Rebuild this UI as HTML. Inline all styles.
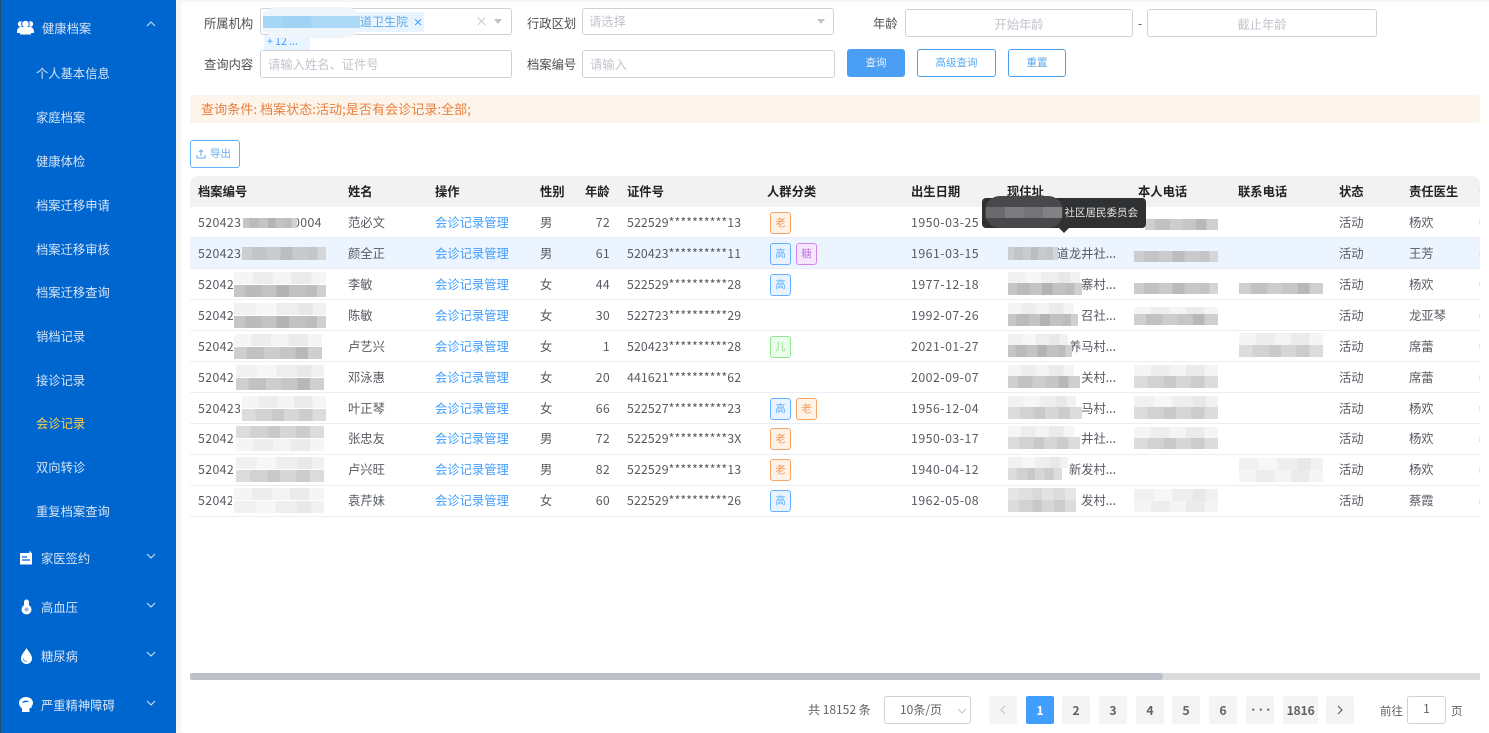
<!DOCTYPE html>
<html lang="zh">
<head>
<meta charset="utf-8">
<title>会诊记录</title>
<style>
html,body{margin:0;padding:0;width:1489px;height:733px;overflow:hidden;background:#f5f5f5}
body{position:relative;font-family:"Liberation Sans","Noto Sans CJK SC",sans-serif;font-size:12.3px;color:#606266}
body,.c,.s,.l,.ph,.b,.pg{font-family:"Noto Sans CJK SC","Liberation Sans",sans-serif}
div,span{box-sizing:border-box}
.a{position:absolute}
#side{position:absolute;left:0;top:0;width:176px;height:733px;background:#0066cf;border-left:1px solid #26486e}
#main{position:absolute;left:181px;top:2px;width:1308px;height:731px;background:#fff;border-radius:4px 0 0 4px}
.s{position:absolute;left:35px;color:#d6e4f5;font-size:12.3px;line-height:20px;white-space:nowrap}
.g{left:41px}
.ch{position:absolute;left:145px;width:10px;height:6px}
.ic{position:absolute}
.l{position:absolute;color:#505050;font-size:12.3px;line-height:20px;white-space:nowrap}
.box{position:absolute;background:#fff;border:1px solid #cfd1d6;border-radius:3px}
.ph{position:absolute;color:#c0c4cc;font-size:12.3px;line-height:20px;white-space:nowrap}
.b{position:absolute;top:49px;height:28px;border:1px solid #4a9ff5;border-radius:3px;color:#5aa9f2;background:#fff;font-size:10.5px;line-height:26px;text-align:center}
.r{position:absolute;left:190px;width:1290px;height:31px;border-bottom:1px solid #ebeef5;background:#fff}
.r::after{content:"";position:absolute;left:1289px;top:13px;width:1px;height:5px;background:#e6e6e6}
.c{position:absolute;top:0;line-height:30px;white-space:nowrap;color:#565a60;font-size:12.3px}
.h{position:absolute;top:0;line-height:31px;white-space:nowrap;color:#222;font-weight:700;font-size:12.3px}
.k1{left:8px;letter-spacing:.4px}.k2{left:158px}.k3{left:245px;color:#409eff}.k4{left:350px}.k5{left:385px;width:35px;text-align:right;letter-spacing:.3px}.k6{left:437px;letter-spacing:.12px}.k8{left:721px;letter-spacing:.5px}.k9{right:364px}.k12{left:1149px}.k13{left:1219px}
.t{position:absolute;top:5px;width:21px;height:22px;border:1px solid;border-radius:3px;font-size:10.5px;line-height:20px;text-align:center}
.t1{left:580px}.t2{left:606px}
.up .c,.up .t{margin-top:-1px}
.o{background:#fff3e8;border-color:#f7a469;color:#f49a58}
.u{background:#e8f3ff;border-color:#66b1ff;color:#66aef5}
.p{background:#f5e6fb;border-color:#cf87ea;color:#c278e0}
.n{background:#edfdec;border-color:#8de88f;color:#8ddf8f}
.halo{position:absolute;background:#fff;border-radius:12px}
.m{position:absolute}
.d1{background:linear-gradient(90deg,#c6c6c6 0 12%,#bbb 12% 30%,#c4c4c4 30% 46%,#b3b3b3 46% 60%,#c2c2c2 60% 78%,#bdbdbd 78% 90%,#d0d0d0 90%)}
.d2{background:linear-gradient(90deg,#cfcfcf 0 14%,#c2c2c2 14% 34%,#cdcdcd 34% 52%,#c6c6c6 52% 70%,#b8b8b8 70% 84%,#cfcfcf 84%)}
.d3{background:linear-gradient(90deg,#dcdcdc 0 16%,#d2d2d2 16% 36%,#c9c9c9 36% 50%,#d6d6d6 50% 68%,#cccccc 68% 84%,#dcdcdc 84%)}
.w1{background:linear-gradient(90deg,#f5f5f5 0 20%,#ededed 20% 42%,#f4f4f4 42% 62%,#ebebeb 62% 84%,#f5f5f5 84%)}
.w2{background:linear-gradient(90deg,#f1f1f1 0 24%,#f7f7f7 24% 46%,#eeeeee 46% 70%,#e8e8e8 70% 86%,#f1f1f1 86%)}
.pg{position:absolute;top:696px;width:28px;height:28px;background:#f4f4f5;border-radius:2px;color:#606266;font-weight:700;font-size:12.3px;line-height:28px;text-align:center}
.pg svg{position:absolute;left:10px;top:9px}
</style>
</head>
<body>
<div id="main"></div>

<div id="side">
  <svg class="ic" style="left:16px;top:20px" width="17" height="15" viewBox="0 0 17 15"><circle cx="3.600" cy="4" r="2.800" fill="#fff"/><circle cx="13.400" cy="4" r="2.800" fill="#fff"/><circle cx="8.500" cy="4" r="3.800" fill="#fff" stroke="#0066cf"/><path d="M0 12c0-3 1.500-5 4-5h9c2.500 0 4 2 4 5v1h-3v1.500H3V13H0z" fill="#fff"/></svg>
  <div class="s g" style="top:18px">健康档案</div>
  <svg class="ch" style="top:21px" viewBox="0 0 10 6"><path d="M1 5l4-4 4 4" fill="none" stroke="#d6e4f5" stroke-width="1"/></svg>
  <div class="s" style="top:63px">个人基本信息</div>
  <div class="s" style="top:107px">家庭档案</div>
  <div class="s" style="top:151px">健康体检</div>
  <div class="s" style="top:195px">档案迁移申请</div>
  <div class="s" style="top:239px">档案迁移审核</div>
  <div class="s" style="top:282px">档案迁移查询</div>
  <div class="s" style="top:326px">销档记录</div>
  <div class="s" style="top:370px">接诊记录</div>
  <div class="s" style="top:413px;color:#ffd04b">会诊记录</div>
  <div class="s" style="top:457px">双向转诊</div>
  <div class="s" style="top:501px">重复档案查询</div>

  <svg class="ic" style="left:18px;top:550px" width="14" height="15" viewBox="0 0 14 15"><path d="M1 3h9.500V1.500h1.500V3h1v11.500H1z" fill="#fff"/><path d="M3 7h5M3 10h8" stroke="#0066cf" stroke-width="1.200"/></svg>
  <div class="s g" style="left:40px;top:548px">家医签约</div>
  <svg class="ch" style="top:553px" viewBox="0 0 10 6"><path d="M1 1l4 4 4-4" fill="none" stroke="#d6e4f5" stroke-width="1"/></svg>

  <svg class="ic" style="left:20px;top:599px" width="11" height="16" viewBox="0 0 11 16"><rect x="3" y="0.500" width="5" height="7" rx="2.500" fill="#fff"/><circle cx="5.500" cy="10.500" r="5" fill="#fff"/><circle cx="5.500" cy="10.500" r="2" fill="#0066cf" opacity=".45"/></svg>
  <div class="s g" style="left:40px;top:597px">高血压</div>
  <svg class="ch" style="top:602px" viewBox="0 0 10 6"><path d="M1 1l4 4 4-4" fill="none" stroke="#d6e4f5" stroke-width="1"/></svg>

  <svg class="ic" style="left:20px;top:648px" width="11" height="16" viewBox="0 0 11 16"><path d="M5.500 0C7 3 11 6.500 11 10.500a5.500 5.500 0 0 1-11 0C0 6.500 4 3 5.500 0z" fill="#fff"/><path d="M2.500 10.500c0 2 1.500 3 3.500 3" fill="none" stroke="#0066cf" stroke-width="1" opacity=".6"/></svg>
  <div class="s g" style="left:40px;top:646px">糖尿病</div>
  <svg class="ch" style="top:651px" viewBox="0 0 10 6"><path d="M1 1l4 4 4-4" fill="none" stroke="#d6e4f5" stroke-width="1"/></svg>

  <svg class="ic" style="left:18px;top:697px" width="14" height="15" viewBox="0 0 14 15"><path d="M7 0c4 0 7 2.500 7 6 0 1.500-.8 2.500-1.500 3.500V11h-2v4H3v-3.500C1 10 0 8 0 6c0-3.500 3-6 7-6z" fill="#fff"/><path d="M3 5.500C4 3.500 8 3 10.500 4.500 8 4.500 6 6 3 5.500z" fill="#0066cf"/></svg>
  <div class="s g" style="left:40px;top:695px">严重精神障碍</div>
  <svg class="ch" style="top:700px" viewBox="0 0 10 6"><path d="M1 1l4 4 4-4" fill="none" stroke="#d6e4f5" stroke-width="1"/></svg>
</div>

<!-- filters -->
<div class="l" style="left:204px;top:13px">所属机构</div>
<div class="box" style="left:260px;top:8px;width:252px;height:27px"></div>
<div class="a" style="left:263px;top:12px;width:161px;height:20px;background:#e8f4ff"></div>
<div class="a" style="left:264px;top:35px;width:46px;height:15px;background:#e8f4ff;font-size:10.500px;line-height:14px;color:#409eff;padding-left:3px;overflow:hidden;white-space:nowrap">+ 12 ...</div>
<div class="a" style="left:263px;top:7px;width:97px;height:31px;background:#eef6fc;border-radius:14px"></div>
<div class="a" style="left:263px;top:16px;width:97px;height:12px;background:linear-gradient(90deg,#a6d6f5 0 20%,#9fd2f3 20% 50%,#acd9f6 50%)"></div>
<div class="a" style="left:360px;top:12px;font-size:12px;line-height:20px;color:#5aa9e6;white-space:nowrap">道卫生院</div>
<div class="a" style="left:413px;top:12px;font-size:10px;line-height:20px;color:#409eff;font-weight:700">×</div>
<div class="a" style="left:475px;top:11px;font-size:13px;line-height:20px;color:#c0c4cc">×</div>
<div class="a" style="left:494px;top:19px;width:0;height:0;border:4px solid transparent;border-top:5px solid #c0c4cc"></div>

<div class="l" style="left:204px;top:54px">查询内容</div>
<div class="box" style="left:260px;top:50px;width:252px;height:28px"></div>
<div class="ph" style="left:268px;top:54px">请输入姓名、证件号</div>

<div class="l" style="left:527px;top:13px">行政区划</div>
<div class="box" style="left:582px;top:8px;width:252px;height:27px"></div>
<div class="ph" style="left:589px;top:11px">请选择</div>
<div class="a" style="left:817px;top:19px;width:0;height:0;border:4px solid transparent;border-top:5px solid #c0c4cc"></div>

<div class="l" style="left:873px;top:13px">年龄</div>
<div class="box" style="left:905px;top:9px;width:228px;height:28px"></div>
<div class="ph" style="left:905px;top:14px;width:228px;text-align:center">开始年龄</div>
<div class="l" style="left:1138px;top:13px">-</div>
<div class="box" style="left:1147px;top:9px;width:230px;height:28px"></div>
<div class="ph" style="left:1147px;top:14px;width:230px;text-align:center">截止年龄</div>

<div class="l" style="left:527px;top:54px">档案编号</div>
<div class="box" style="left:582px;top:50px;width:253px;height:28px"></div>
<div class="ph" style="left:590px;top:54px">请输入</div>

<div class="b" style="left:847px;width:58px;background:#4a9ff5;color:#e8f3ff">查询</div>
<div class="b" style="left:917px;width:79px">高级查询</div>
<div class="b" style="left:1008px;width:58px">重置</div>

<div class="a" style="left:190px;top:95px;width:1290px;height:28px;background:#fdf5ec;border-radius:2px;color:#e6813e;font-size:13.100px;line-height:28px;padding-left:11px;white-space:nowrap;font-family:'Noto Sans CJK SC',sans-serif">查询条件: 档案状态:活动;是否有会诊记录:全部;</div>

<div class="a" style="left:190px;top:140px;width:50px;height:28px;border:1px solid #66b1ff;border-radius:3px;background:#fff;color:#66aef5;font-size:10.500px;line-height:26px;padding-left:19px;font-family:'Noto Sans CJK SC',sans-serif">导出</div>
<svg class="ic" style="left:196px;top:149px" width="10" height="10" viewBox="0 0 10 10"><path d="M5 7V1M3 3l2-2 2 2M1 6v3h8V6" fill="none" stroke="#66aef5" stroke-width="1"/></svg>

<!-- table head -->
<div class="r" style="top:176px;background:#f2f2f2;border-radius:8px 8px 0 0;border:0">
  <span class="h" style="left:8px">档案编号</span><span class="h" style="left:158px">姓名</span><span class="h" style="left:245px">操作</span><span class="h" style="left:350px">性别</span><span class="h" style="left:395px">年龄</span><span class="h" style="left:437px">证件号</span><span class="h" style="left:577px">人群分类</span><span class="h" style="left:721px">出生日期</span><span class="h" style="left:817px">现住址</span><span class="h" style="left:948px">本人电话</span><span class="h" style="left:1048px">联系电话</span><span class="h" style="left:1149px">状态</span><span class="h" style="left:1219px">责任医生</span>
</div>

<div class="r" style="top:207px"><span class="c k1">520423</span><span class="c" style="left:103px;letter-spacing:.4px">0004</span><span class="c k2">范必文</span><span class="c k3">会诊记录管理</span><span class="c k4">男</span><span class="c k5">72</span><span class="c k6">522529**********13</span><span class="t t1 o">老</span><span class="c k8">1950-03-25</span><span class="c k12">活动</span><span class="c k13">杨欢</span></div>
<div class="r" style="top:238px;background:#ecf5ff"><span class="c k1">520423</span><span class="c k2">颜全正</span><span class="c k3">会诊记录管理</span><span class="c k4">男</span><span class="c k5">61</span><span class="c k6">520423**********11</span><span class="t t1 u">高</span><span class="t t2 p">糖</span><span class="c k8">1961-03-15</span><span class="c k9">道龙井社...</span><span class="c k12">活动</span><span class="c k13">王芳</span></div>
<div class="r" style="top:269px"><span class="c k1">52042</span><span class="c k2">李敏</span><span class="c k3">会诊记录管理</span><span class="c k4">女</span><span class="c k5">44</span><span class="c k6">522529**********28</span><span class="t t1 u">高</span><span class="c k8">1977-12-18</span><span class="c k9">寨村...</span><span class="c k12">活动</span><span class="c k13">杨欢</span></div>
<div class="r" style="top:300px"><span class="c k1">52042</span><span class="c k2">陈敏</span><span class="c k3">会诊记录管理</span><span class="c k4">女</span><span class="c k5">30</span><span class="c k6">522723**********29</span><span class="c k8">1992-07-26</span><span class="c k9">召社...</span><span class="c k12">活动</span><span class="c k13">龙亚琴</span></div>
<div class="r" style="top:331px"><span class="c k1">52042</span><span class="c k2">卢艺兴</span><span class="c k3">会诊记录管理</span><span class="c k4">女</span><span class="c k5">1</span><span class="c k6">520423**********28</span><span class="t t1 n">儿</span><span class="c k8">2021-01-27</span><span class="c k9">养马村...</span><span class="c k12">活动</span><span class="c k13">席蕾</span></div>
<div class="r" style="top:362px"><span class="c k1">52042</span><span class="c k2">邓泳惠</span><span class="c k3">会诊记录管理</span><span class="c k4">女</span><span class="c k5">20</span><span class="c k6">441621**********62</span><span class="c k8">2002-09-07</span><span class="c k9">关村...</span><span class="c k12">活动</span><span class="c k13">席蕾</span></div>
<div class="r" style="top:393px"><span class="c k1">520423</span><span class="c k2">叶正琴</span><span class="c k3">会诊记录管理</span><span class="c k4">女</span><span class="c k5">66</span><span class="c k6">522527**********23</span><span class="t t1 u">高</span><span class="t t2 o">老</span><span class="c k8">1956-12-04</span><span class="c k9">马村...</span><span class="c k12">活动</span><span class="c k13">杨欢</span></div>
<div class="r up" style="top:424px"><span class="c k1">52042</span><span class="c k2">张忠友</span><span class="c k3">会诊记录管理</span><span class="c k4">男</span><span class="c k5">72</span><span class="c k6">522529**********3X</span><span class="t t1 o">老</span><span class="c k8">1950-03-17</span><span class="c k9">井社...</span><span class="c k12">活动</span><span class="c k13">杨欢</span></div>
<div class="r up" style="top:455px"><span class="c k1">52042</span><span class="c k2">卢兴旺</span><span class="c k3">会诊记录管理</span><span class="c k4">男</span><span class="c k5">82</span><span class="c k6">522529**********13</span><span class="t t1 o">老</span><span class="c k8">1940-04-12</span><span class="c k9">新发村...</span><span class="c k12">活动</span><span class="c k13">杨欢</span></div>
<div class="r up" style="top:486px"><span class="c k1">52042</span><span class="c k2">袁芹妹</span><span class="c k3">会诊记录管理</span><span class="c k4">女</span><span class="c k5">60</span><span class="c k6">522529**********26</span><span class="t t1 u">高</span><span class="c k8">1962-05-08</span><span class="c k9">发村...</span><span class="c k12">活动</span><span class="c k13">蔡霞</span></div>

<!-- mosaics: id col -->
<div class="m d1" style="left:243px;top:218px;width:54px;height:10px"></div>
<div class="m d1" style="left:242px;top:247px;width:84px;height:13px;opacity:.85"></div>
<div class="halo" style="left:233px;top:271px;width:94px;height:28px"></div><div class="m w1" style="left:234px;top:272px;width:92px;height:12px"></div><div class="m d1" style="left:234px;top:285px;width:92px;height:12px"></div>
<div class="halo" style="left:233px;top:302px;width:94px;height:28px"></div><div class="m w2" style="left:234px;top:303px;width:92px;height:12px"></div><div class="m d1" style="left:234px;top:316px;width:92px;height:12px"></div>
<div class="halo" style="left:233px;top:333px;width:90px;height:28px"></div><div class="m w1" style="left:234px;top:334px;width:88px;height:12px"></div><div class="m d2" style="left:234px;top:347px;width:88px;height:12px"></div>
<div class="halo" style="left:233px;top:364px;width:92px;height:28px"></div><div class="m w2" style="left:236px;top:365px;width:88px;height:12px"></div><div class="m d2" style="left:236px;top:378px;width:88px;height:12px"></div>
<div class="halo" style="left:240px;top:395px;width:88px;height:28px"></div><div class="m w1" style="left:242px;top:396px;width:84px;height:12px"></div><div class="m d3" style="left:242px;top:409px;width:84px;height:12px"></div>
<div class="halo" style="left:234px;top:425px;width:92px;height:28px"></div><div class="m d3" style="left:236px;top:426px;width:88px;height:12px"></div><div class="m w1" style="left:236px;top:439px;width:88px;height:12px"></div>
<div class="halo" style="left:234px;top:456px;width:92px;height:28px"></div><div class="m w2" style="left:236px;top:457px;width:88px;height:12px"></div><div class="m d3" style="left:236px;top:470px;width:88px;height:12px"></div>
<div class="halo" style="left:232px;top:487px;width:94px;height:28px"></div><div class="m w1" style="left:234px;top:488px;width:90px;height:12px"></div><div class="m w2" style="left:234px;top:501px;width:90px;height:12px"></div>

<!-- mosaics: address -->
<div class="m d1" style="left:1008px;top:247px;width:50px;height:13px;opacity:.85"></div>
<div class="m w2" style="left:1008px;top:272px;width:72px;height:11px"></div><div class="m d1" style="left:1008px;top:283px;width:74px;height:12px"></div>
<div class="m w1" style="left:1008px;top:303px;width:66px;height:11px"></div><div class="m d1" style="left:1008px;top:314px;width:70px;height:12px"></div>
<div class="m w2" style="left:1008px;top:334px;width:60px;height:11px"></div><div class="m d1" style="left:1008px;top:345px;width:64px;height:12px"></div>
<div class="m w1" style="left:1008px;top:365px;width:66px;height:11px"></div><div class="m d2" style="left:1008px;top:376px;width:72px;height:12px"></div>
<div class="m w2" style="left:1008px;top:396px;width:68px;height:11px"></div><div class="m d3" style="left:1008px;top:407px;width:74px;height:12px"></div>
<div class="m w1" style="left:1008px;top:426px;width:66px;height:11px"></div><div class="m d3" style="left:1008px;top:437px;width:72px;height:12px"></div>
<div class="m w2" style="left:1008px;top:457px;width:60px;height:11px"></div><div class="m d3" style="left:1008px;top:468px;width:54px;height:12px"></div>
<div class="m d3" style="left:1008px;top:488px;width:68px;height:12px;opacity:.7"></div><div class="m d3" style="left:1008px;top:500px;width:68px;height:12px"></div>

<!-- mosaics: phone -->
<div class="m d2" style="left:1145px;top:219px;width:73px;height:11px"></div>
<div class="m d1" style="left:1134px;top:251px;width:84px;height:11px;opacity:.85"></div>
<div class="m d1" style="left:1134px;top:283px;width:84px;height:11px;opacity:.9"></div>
<div class="m w1" style="left:1134px;top:307px;width:84px;height:7px"></div><div class="m d2" style="left:1134px;top:314px;width:84px;height:11px"></div>
<div class="m w1" style="left:1134px;top:365px;width:84px;height:11px"></div><div class="m d3" style="left:1134px;top:376px;width:84px;height:12px"></div>
<div class="m w2" style="left:1134px;top:396px;width:84px;height:11px"></div><div class="m d3" style="left:1134px;top:407px;width:84px;height:12px"></div>
<div class="m w1" style="left:1134px;top:427px;width:84px;height:11px"></div><div class="m d3" style="left:1134px;top:438px;width:84px;height:11px"></div>
<div class="m w2" style="left:1134px;top:489px;width:84px;height:12px"></div><div class="m w1" style="left:1134px;top:501px;width:84px;height:11px"></div>

<!-- mosaics: contact -->
<div class="m d2" style="left:1239px;top:283px;width:84px;height:11px"></div>
<div class="m w1" style="left:1239px;top:333px;width:84px;height:12px"></div><div class="m d3" style="left:1239px;top:345px;width:84px;height:12px"></div>
<div class="m w2" style="left:1239px;top:458px;width:84px;height:12px"></div><div class="m w1" style="left:1239px;top:470px;width:84px;height:12px"></div>

<!-- tooltip -->
<div class="a" style="left:982px;top:198px;width:164px;height:30px;background:#303133;border-radius:4px;color:#e6e6e6;font-size:10.500px;line-height:30px;text-align:right;padding-right:8px;font-family:'Noto Sans CJK SC',sans-serif">社区居民委员会</div>
<div class="a" style="left:1059px;top:228px;width:0;height:0;border:5px solid transparent;border-top:5px solid #303133"></div>
<div class="a" style="left:985px;top:196px;width:78px;height:32px;background:#48494b;border-radius:15px"></div>
<div class="a" style="left:986px;top:207px;width:76px;height:11px;background:linear-gradient(90deg,#6a6a6c 0 25%,#7c7c7e 25% 50%,#747476 50% 75%,#828284 75%)"></div>

<!-- scrollbar -->
<div class="a" style="left:190px;top:673px;width:1290px;height:7px;background:#dcdcdc"></div>
<div class="a" style="left:190px;top:673px;width:973px;height:7px;background:#bcc0c8;border-radius:3px"></div>

<!-- pagination -->
<div class="l" style="left:808px;top:700px;font-size:12px;color:#606266">共 18152 条</div>
<div class="box" style="left:884px;top:696px;width:87px;height:28px"></div>
<div class="l" style="left:900px;top:700px;color:#606266;font-size:12px">10条/页</div>
<svg class="ic" style="left:957px;top:708px" width="10" height="6" viewBox="0 0 10 6"><path d="M1 1l4 4 4-4" fill="none" stroke="#c0c4cc"/></svg>
<div class="pg" style="left:989px"><svg width="8" height="10" viewBox="0 0 8 10"><path d="M6 1L2 5l4 4" fill="none" stroke="#c0c4cc" stroke-width="1.200"/></svg></div>
<div class="pg" style="left:1026px;background:#409eff;color:#fff">1</div>
<div class="pg" style="left:1062px">2</div>
<div class="pg" style="left:1099px">3</div>
<div class="pg" style="left:1136px">4</div>
<div class="pg" style="left:1172px">5</div>
<div class="pg" style="left:1209px">6</div>
<div class="pg" style="left:1246px;font-size:9px;letter-spacing:-1.500px">···</div>
<div class="pg" style="left:1283px;width:35px;letter-spacing:-.3px">1816</div>
<div class="pg" style="left:1326px"><svg width="8" height="10" viewBox="0 0 8 10"><path d="M2 1l4 4-4 4" fill="none" stroke="#606266" stroke-width="1.200"/></svg></div>
<div class="l" style="left:1380px;top:701px;font-size:11.500px;color:#606266">前往</div>
<div class="box" style="left:1407px;top:696px;width:39px;height:28px"></div>
<div class="l" style="left:1407px;top:699px;width:39px;text-align:center;color:#606266;font-size:12px">1</div>
<div class="l" style="left:1451px;top:701px;font-size:11.500px;color:#606266">页</div>
</body>
</html>
